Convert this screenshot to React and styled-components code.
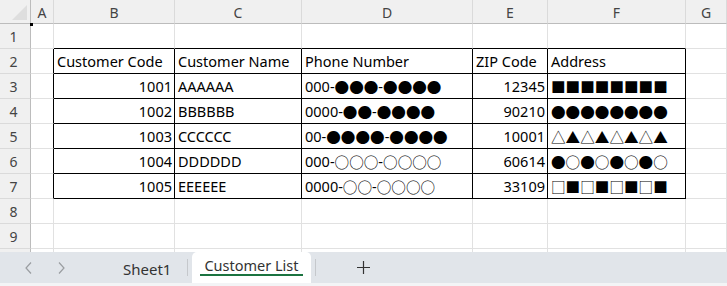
import React from 'react';
import styled, { createGlobalStyle } from 'styled-components';

const GlobalStyle = createGlobalStyle`
	html, body {
		margin: 0;
		padding: 0;
		background: #fff;
	}
	body {
		font-family: 'Noto Sans', 'Noto Sans CJK JP', sans-serif;
		overflow: hidden;
	}
`;

const COLS = ['A', 'B', 'C', 'D', 'E', 'F', 'G'];
const SYMBOLS = /([●○■□▲△]+)/;

const rows = [
	['1001', 'AAAAAA', '000-●●●-●●●●', '12345', '■■■■■■■■'],
	['1002', 'BBBBBB', '0000-●●-●●●●', '90210', '●●●●●●●●'],
	['1003', 'CCCCCC', '00-●●●●-●●●●', '10001', '△▲△▲△▲△▲'],
	['1004', 'DDDDDD', '000-○○○-○○○○', '60614', '●○●○●○●○'],
	['1005', 'EEEEEE', '0000-○○-○○○○', '33109', '□■□■□■□■'],
];

const Screen = styled.div`
	width: 727px;
	height: 286px;
	display: flex;
	flex-direction: column;
	background: #fff;
`;

const Sheet = styled.div`
	height: 252px;
	flex: none;
	overflow: hidden;
	display: grid;
	grid-template-columns: 31px 23px 121px 127px 171px 75px 138px 1fr;
	grid-template-rows: 24px;
	grid-auto-rows: 25px;
`;

const Corner = styled.div`
	position: relative;
	background: #f0f0f0;
	border-right: 1px solid #bcbcbc;
	border-bottom: 1px solid #bcbcbc;
	&::after {
		content: '';
		position: absolute;
		right: 3px;
		bottom: 3px;
		border-style: solid;
		border-width: 0 0 15px 15px;
		border-color: transparent transparent #dedede transparent;
	}
`;

const ColHead = styled.div`
	background: #f0f0f0;
	border-right: 1px solid #dadada;
	border-bottom: 1px solid #bcbcbc;
	color: #444;
	font-size: 14px;
	display: flex;
	align-items: center;
	justify-content: center;
	padding-top: 1px;
`;

const RowHead = styled.div`
	background: #f0f0f0;
	border-right: 1px solid #bcbcbc;
	border-bottom: 1px solid #dadada;
	color: #444;
	font-size: 14px;
	display: flex;
	align-items: center;
	justify-content: center;
	padding-right: 3px;
	padding-top: 1px;
`;

const Cell = styled.div`
	position: relative;
	border-right: 1px solid ${(p) => (p.$right ? '#000' : '#e1e1e1')};
	border-bottom: 1px solid ${(p) => (p.$bottom ? '#000' : '#e1e1e1')};
	color: #000;
	font-size: 14.5px;
	display: flex;
	align-items: center;
	justify-content: ${(p) => (p.$num ? 'flex-end' : 'flex-start')};
	padding: 0 ${(p) => (p.$num ? '2px' : '0')} 0 ${(p) => (p.$num ? '0' : '3px')};
	white-space: nowrap;
	overflow: visible;
`;

const Anchor = styled.span`
	position: absolute;
	left: -1px;
	top: -1px;
	width: 3px;
	height: 3px;
	background: #000;
`;

const Sym = styled.span`
	font-family: 'Noto Sans CJK JP', sans-serif;
	font-size: 14.6px;
`;

const TabBar = styled.div`
	height: 31px;
	flex: none;
	background: #e1e5ea;
	display: flex;
	align-items: flex-end;
	color: #333;
`;

const Strip = styled.div`
	flex: 1;
	background: #f3f4f6;
`;

const Arrow = styled.div`
	width: 32px;
	height: 31px;
	display: flex;
	align-items: center;
	justify-content: center;
	margin-left: ${(p) => p.$ml || 0}px;
`;

const Tab = styled.div`
	display: flex;
	align-items: center;
	font-size: ${(p) => (p.$active ? '14.5px' : '15px')};
	padding: 0 12px;
	margin-left: ${(p) => p.$ml || 0}px;
	background: ${(p) => (p.$active ? '#fff' : 'transparent')};
	border-radius: 5px 5px 0 0;
	position: relative;
	height: 31px;
	padding-bottom: ${(p) => (p.$active ? '5px' : '0')};
	padding-top: ${(p) => (p.$active ? '0' : '3px')};
	box-sizing: border-box;
	&::after {
		content: '';
		display: ${(p) => (p.$active ? 'block' : 'none')};
		position: absolute;
		left: 8px;
		right: 8px;
		bottom: 7px;
		height: 2px;
		background: #1b7340;
	}
`;

const Sep = styled.div`
	width: 1px;
	height: 17px;
	align-self: center;
	background: #c5c8cc;
	margin: 0 4px;
`;

const Plus = styled.div`
	height: 31px;
	display: flex;
	align-items: center;
	margin-left: ${(p) => p.$ml || 0}px;
`;

const renderText = (text) =>
	text.split(SYMBOLS).map((part, i) =>
		SYMBOLS.test(part) ? <Sym key={i}>{part}</Sym> : <React.Fragment key={i}>{part}</React.Fragment>
	);

const Chevron = ({ dir }) => (
	<svg width='10' height='14' viewBox='0 0 10 14' fill='none'>
		<path
			d={dir === 'left' ? 'M7 1.5 L2 7 L7 12.5' : 'M3 1.5 L8 7 L3 12.5'}
			stroke='#9a9da1'
			strokeWidth='1.2'
		/>
	</svg>
);

const App = () => {
	const header = ['Customer Code', 'Customer Name', 'Phone Number', 'ZIP Code', 'Address'];
	const numCols = [0, 3];

	// row index 1..10, column index 0..6 (A..G)
	const cellFor = (r, c) => {
		const inRow = r >= 2 && r <= 7;
		const inCol = c >= 1 && c <= 5;
		const right = inRow && c >= 0 && c <= 5;
		const bottom = inCol && r >= 1 && r <= 7;
		let content = null;
		let num = false;
		if (inRow && inCol) {
			if (r === 2) content = header[c - 1];
			else {
				content = rows[r - 3][c - 1];
				num = numCols.includes(c - 1);
			}
		}
		return (
			<Cell key={`${r}-${c}`} $right={right} $bottom={bottom} $num={num}>
				{r === 1 && c === 0 && <Anchor />}
				{content && renderText(content)}
			</Cell>
		);
	};

	const grid = [];
	grid.push(<Corner key='corner' />);
	COLS.forEach((c) => grid.push(<ColHead key={c}>{c}</ColHead>));
	for (let r = 1; r <= 10; r++) {
		grid.push(<RowHead key={`h${r}`}>{r}</RowHead>);
		for (let c = 0; c <= 6; c++) grid.push(cellFor(r, c));
	}

	return (
		<>
			<GlobalStyle />
			<Screen>
				<Sheet>{grid}</Sheet>
				<TabBar>
					<Arrow $ml={13}>
						<Chevron dir='left' />
					</Arrow>
					<Arrow>
						<Chevron dir='right' />
					</Arrow>
					<Tab $ml={34}>Sheet1</Tab>
					<Sep />
					<Tab $active>Customer List</Tab>
					<Sep />
					<Plus $ml={37}>
						<svg width='13' height='13' viewBox='0 0 13 13'>
							<path d='M6.5 0 V13 M0 6.5 H13' stroke='#333' strokeWidth='1.2' />
						</svg>
					</Plus>
				</TabBar>
				<Strip />
			</Screen>
		</>
	);
};

export default App;
